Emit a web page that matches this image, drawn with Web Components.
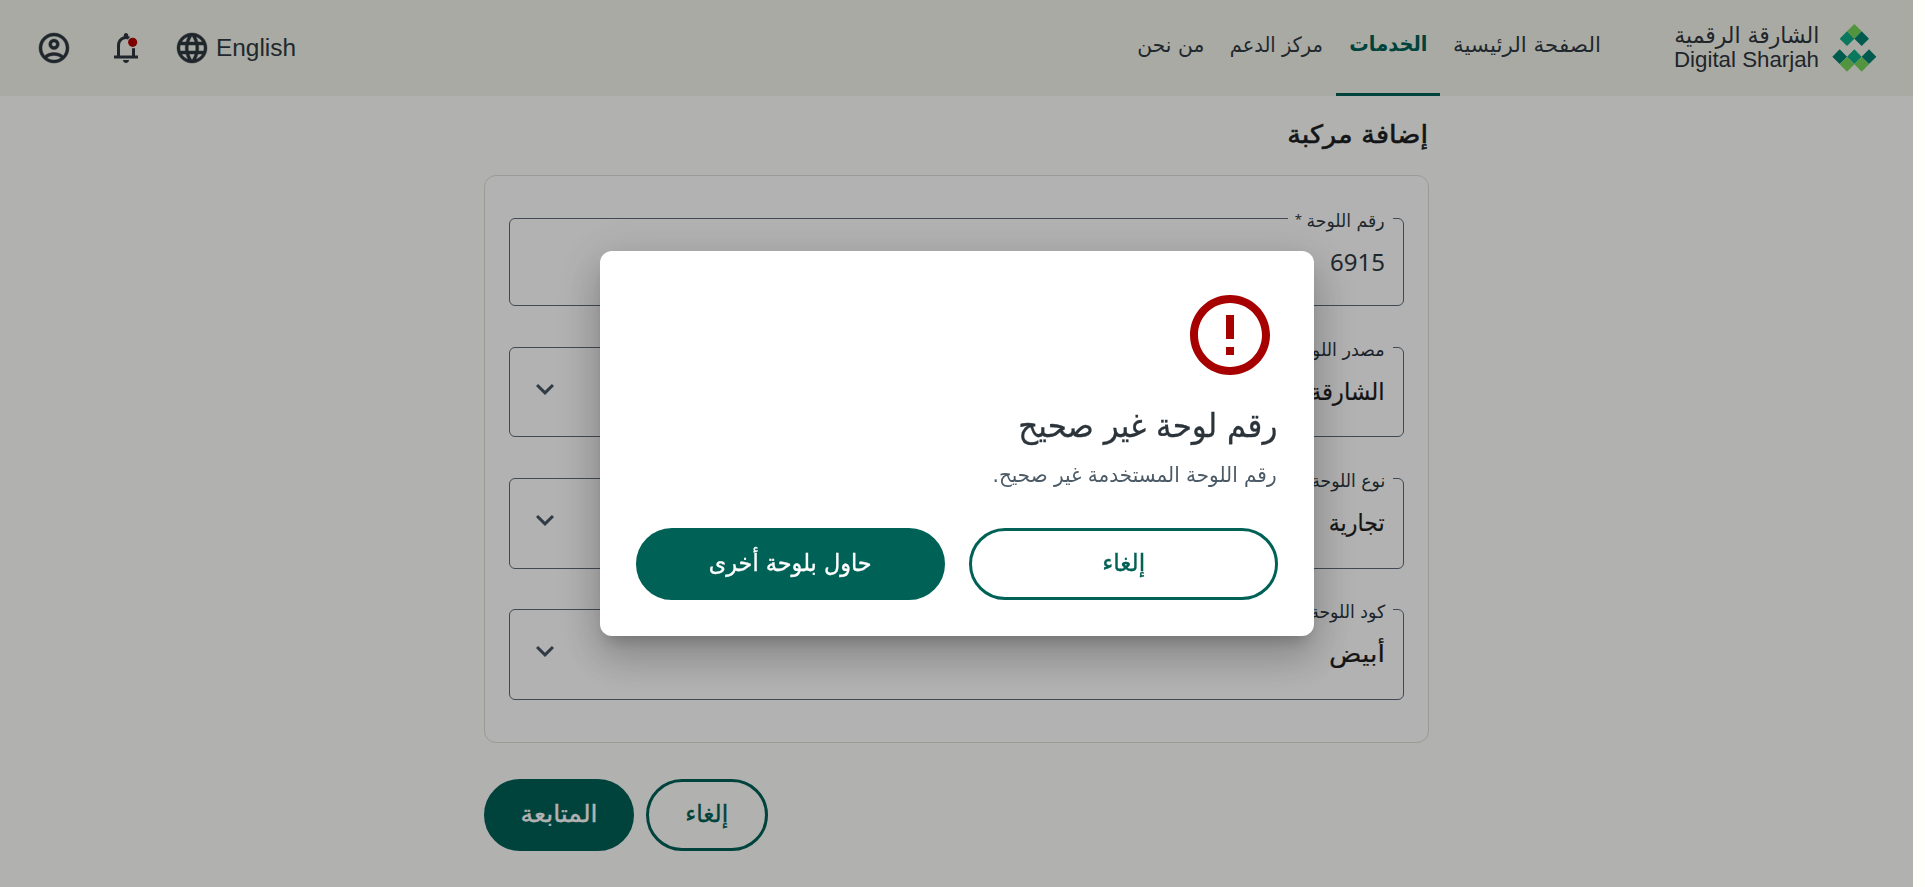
<!DOCTYPE html>
<html lang="ar">
<head>
<meta charset="utf-8">
<title>إضافة مركبة</title>
<style>
html,body{margin:0;height:100%;background:#fefefb;overflow:hidden}
body{font-family:"DejaVu Sans",sans-serif;color:#2f3a42}
</style>
</head>
<body>
<ds-app></ds-app>
<script>
const define = (name, html, after) => customElements.define(name, class extends HTMLElement {
  connectedCallback() {
    if (this.shadowRoot) return;
    const root = this.attachShadow({ mode: 'open' });
    const t = document.createElement('template');
    t.innerHTML = typeof html === 'function' ? html(this) : html;
    root.append(t.content.cloneNode(true));
    if (after) after(this, root);
  }
});

/* One line of text condensed or widened to an exact measure */
define('fit-text', el => `
<style>
:host{display:block;flex:none;width:${el.getAttribute('w')}px;white-space:nowrap;
 font-size:${el.getAttribute('size')}px;line-height:${el.getAttribute('line')}px;height:${el.getAttribute('line')}px}
span{display:inline-block;transform-origin:right center;vertical-align:top}
:host([dir=ltr]) span{transform-origin:left center}
</style><span><slot></slot></span>`, (el, root) => {
  const s = root.querySelector('span');
  const natural = s.getBoundingClientRect().width;
  if (natural) s.style.transform = `scaleX(${(+el.getAttribute('w') / natural).toFixed(4)})`;
});

define('ds-button', `
<style>
:host{display:flex;box-sizing:border-box;height:72px;border:3px solid #006156;border-radius:36px;align-items:center;justify-content:center;color:#006156;padding-bottom:2px;-webkit-text-stroke:.35px currentColor}
:host([primary]){background:#006156;color:#fff}
</style><slot></slot>`);

define('ds-logo', `
<style>
:host{display:flex;align-items:flex-start;gap:13px;color:#2f353d}
svg{display:block;margin-top:24px}
.t{padding-top:23px}
</style>
<svg width="45" height="48" viewBox="0 0 135 144">
<g fill="#78d559"><path d="M67 0l22 22-22 22-22-22zM45 99l22 22-22 22-22-22zM89 99l22 22-22 22-22-22z"/></g>
<g fill="#0dad84"><path d="M45 22l22 22-22 22-22-22zM67 76l22 22-22 22-22-22z"/></g>
<g fill="#008170"><path d="M89 22l22 22-22 22-22-22zM23 76l22 22-22 22-22-22zM111 76l22 22-22 22-22-22z"/></g>
</svg>
<div class="t"><fit-text w="145" size="23" line="24">الشارقة الرقمية</fit-text>
<fit-text dir="ltr" w="145" size="22" line="25" style="font-family:'Liberation Sans',sans-serif">Digital Sharjah</fit-text></div>`);

define('ds-tab', `
<style>
:host{display:block;box-sizing:border-box;height:96px;padding:0 13px;border-bottom:3px solid transparent}
:host([active]){border-color:#006156;color:#006156;font-weight:700}
</style><slot></slot>`);

define('ds-header', `
<style>
:host{display:flex;height:96px;background:#f3f4ea;padding:0 36px;box-sizing:border-box;justify-content:space-between;flex:none}
.side,nav{display:flex}
nav{margin-right:60px}
.tools{display:flex;align-items:center;direction:ltr}
svg{display:block;width:36px;height:36px;fill:#2e3840}
.bold{stroke:#2e3840;stroke-width:.3}
.bell{margin:0 30px 0 36px}
fit-text[dir]{margin-left:6px}
</style>
<div class="side"><ds-logo></ds-logo>
<nav>
<ds-tab><fit-text w="148" size="21" line="91">الصفحة الرئيسية</fit-text></ds-tab>
<ds-tab active><fit-text w="78" size="21" line="89">الخدمات</fit-text></ds-tab>
<ds-tab><fit-text w="93" size="21" line="91">مركز الدعم</fit-text></ds-tab>
<ds-tab><fit-text w="67" size="21" line="91">من نحن</fit-text></ds-tab>
</nav></div>
<div class="tools">
<svg class="bold" viewBox="0 0 24 24"><path d="M5.85 17.1q1.275-.975 2.85-1.537T12 15t3.3.563 2.85 1.537q.875-1.025 1.363-2.325T20 12q0-3.325-2.337-5.663T12 4 6.338 6.338 4 12q0 1.475.488 2.775T5.85 17.1M12 13q-1.475 0-2.488-1.012T8.5 9.5t1.013-2.488T12 6t2.488 1.013T15.5 9.5t-1.012 2.488T12 13m0 9q-2.075 0-3.9-.788t-3.175-2.137-2.137-3.175T2 12t.788-3.9 2.137-3.175T8.1 2.788 12 2t3.9.788 3.175 2.137T21.213 8.1 22 12t-.788 3.9-2.137 3.175-3.175 2.138T12 22m0-2q1.325 0 2.5-.387t2.15-1.113q-.975-.725-2.15-1.112T12 17t-2.5.388T7.35 18.5q.975.725 2.15 1.113T12 20m0-9q.65 0 1.075-.425T13.5 9.5t-.425-1.075T12 8t-1.075.425T10.5 9.5t.425 1.075T12 11"/></svg>
<svg class="bell" viewBox="0 0 24 24"><path d="M4 19v-2h2v-7q0-2.075 1.25-3.687T10.5 4.2v-.7q0-.625.438-1.062T12 2t1.063.438T13.5 3.5v.7q.7.17 1.3.5a4.1 4.1 0 0 0-1.4 1.55Q12.7 6 12 6 10.350 6 9.175 7.175T8 10v7h8v-4.8q1 .15 2-.2v5h2v2zm8 3q-.825 0-1.412-.587T10 20h4q0 .825-.587 1.413T12 22"/><circle cx="16.45" cy="8.2" r="3.05" fill="#b40000"/></svg>
<svg class="bold" viewBox="0 0 24 24"><path d="M12 22q-2.050 0-3.875-.788t-3.187-2.150-2.150-3.187T2 12q0-2.075.788-3.887t2.150-3.175T8.125 2.788 12 2q2.075 0 3.888.788t3.174 2.150 2.150 3.175T22 12q0 2.050-.788 3.875t-2.150 3.188-3.175 2.150T12 22m0-2.050q.65-.9 1.125-1.875T13.900 16h-3.800q.3 1.100.775 2.075T12 19.950m-2.600-.4q-.45-.825-.788-1.713T8.050 16H5.100q.725 1.250 1.813 2.175T9.400 19.550m5.200 0q1.400-.45 2.488-1.375T18.900 16h-2.950q-.225.950-.562 1.838T14.600 19.550M4.250 14h3.400q-.075-.5-.112-.988T7.500 12t.038-1.012T7.650 10h-3.400q-.125.5-.188.988T4 12t.063 1.013.187.987m5.400 0h4.700q.075-.5.113-.988T14.500 12t-.038-1.012T14.350 10h-4.700q-.075.5-.112.988T9.500 12t.038 1.013.112.987m6.700 0h3.400q.125-.5.188-.988T20 12t-.063-1.012T19.750 10h-3.400q.075.5.113.988T16.500 12t-.038 1.013-.112.987m-.4-6h2.950q-.725-1.250-1.812-2.175T14.600 4.450q.45.825.788 1.713T15.950 8M10.100 8h3.800q-.3-1.100-.775-2.075T12 4.050q-.65.9-1.125 1.875T10.100 8m-5 0h2.950q.225-.950.563-1.837T9.400 4.450Q8 4.900 6.913 5.825T5.100 8"/></svg>
<fit-text dir="ltr" w="80" size="23.5" line="36" style="font-family:'Liberation Sans',sans-serif">English</fit-text>
</div>`);

define('ds-field', el => `
<style>
:host{display:block;height:${el.getAttribute('h')}px}
fieldset{box-sizing:border-box;height:100%;min-width:0;margin:0;padding:0 10px 0 17px;border:1px solid #5c6b7a;border-radius:6px}
legend{box-sizing:border-box;width:105px;height:1px;padding:0 8px;margin:0}
legend div{margin-top:-7px}
.row{display:flex;justify-content:space-between;padding:23px 8px 0 0;color:#1e1e1e}
.v{margin-top:3px;-webkit-text-stroke:.2px currentColor}
svg{display:block;width:36px;height:36px;fill:#455563}
</style>
<fieldset><legend><div><slot name="label"></slot></div></legend>
<div class="row"><div class="v"><slot></slot></div>
${el.hasAttribute('select') ? '<svg viewBox="0 0 24 24"><path d="M16.590 8.590 12 13.170 7.410 8.590 6 10l6 6 6-6z"/></svg>' : ''}</div></fieldset>`);

define('ds-card', `
<style>
:host{display:flex;flex-direction:column;box-sizing:border-box;height:568px;background:#fff;border:1px solid #dddfd5;border-radius:12px;padding:42px 24px}
ds-field{margin-bottom:41px}
ds-field fit-text[slot]{color:#2a343c}
.req{display:flex;gap:5px}
.req sup{font:13px/16px "Noto Sans",sans-serif;margin:0}
</style>
<ds-field h="88"><div class="req" slot="label"><fit-text w="78" size="18" line="20">رقم اللوحة</fit-text><sup>*</sup></div><fit-text w="55" size="24" line="33" style="font-family:'Noto Sans',sans-serif;color:#2f3a42;-webkit-text-stroke:0">6915</fit-text></ds-field>
<ds-field h="90" select><fit-text slot="label" w="93" size="18" line="20">مصدر اللوحة</fit-text><fit-text w="75" size="24" line="37">الشارقة</fit-text></ds-field>
<ds-field h="91" select style="margin-bottom:40px"><fit-text slot="label" w="74" size="18" line="20">نوع اللوحة</fit-text><fit-text w="56" size="24" line="37">تجارية</fit-text></ds-field>
<ds-field h="91" select style="margin-bottom:0"><fit-text slot="label" w="75" size="18" line="20">كود اللوحة</fit-text><fit-text w="56" size="24" line="37">أبيض</fit-text></ds-field>`);

define('ds-page', `
<style>
:host{display:block;width:945px;margin:0 auto;padding-top:19px}
h1{margin:0 0 20px;padding-right:1px;font-weight:500;color:#1c1e21;-webkit-text-stroke:.6px currentColor}
.actions{display:flex;gap:12px;justify-content:flex-end;margin-top:36px}
</style>
<h1><fit-text w="141" size="25" line="39">إضافة مركبة</fit-text></h1>
<ds-card style="margin-top:21px"></ds-card>
<div class="actions">
<ds-button style="width:122px"><fit-text w="43" size="24" line="36">إلغاء</fit-text></ds-button>
<ds-button primary style="width:150px"><fit-text w="77" size="24" line="36">المتابعة</fit-text></ds-button>
</div>`);

define('ds-dialog', `
<style>
:host{position:fixed;inset:0 12px 0 0;display:flex;align-items:center;justify-content:center;background:rgba(0,0,0,.3)}
section{box-sizing:border-box;width:714px;height:385px;margin-left:1px;background:#fff;border-radius:12px;padding:36px;
box-shadow:0 11px 15px -7px rgba(0,0,0,.2),0 24px 38px 3px rgba(0,0,0,.14),0 9px 46px 8px rgba(0,0,0,.12)}
svg{display:block;width:96px;height:96px;fill:#a60000}
h2{margin:19px 1px 10px;font-weight:400;color:#2b343b;-webkit-text-stroke:.3px currentColor}
p{margin:0 1px 38px;color:#4b5a67}
.b{display:flex;gap:24px}
.b ds-button{flex:1}
</style>
<section>
<svg viewBox="0 0 24 24"><path d="M11 15h2v2h-2zm0-8h2v6h-2zm.99-5C6.470 2 2 6.480 2 12s4.470 10 9.990 10C17.520 22 22 17.520 22 12S17.520 2 11.990 2M12 20c-4.420 0-8-3.580-8-8s3.580-8 8-8 8 3.580 8 8-3.580 8-8 8"/></svg>
<h2><fit-text w="259" size="33" line="48">رقم لوحة غير صحيح</fit-text></h2>
<p><fit-text w="284" size="21" line="30">رقم اللوحة المستخدمة غير صحيح.</fit-text></p>
<div class="b"><ds-button><fit-text w="43" size="24" line="36">إلغاء</fit-text></ds-button>
<ds-button primary><fit-text w="163" size="24" line="36">حاول بلوحة أخرى</fit-text></ds-button></div>
</section>`);

define('ds-app', `
<style>
:host{display:flex;flex-direction:column;direction:rtl;width:1913px;height:887px;overflow:hidden}
</style>
<ds-header></ds-header><ds-page></ds-page><ds-dialog></ds-dialog>`);
</script>
</body>
</html>
